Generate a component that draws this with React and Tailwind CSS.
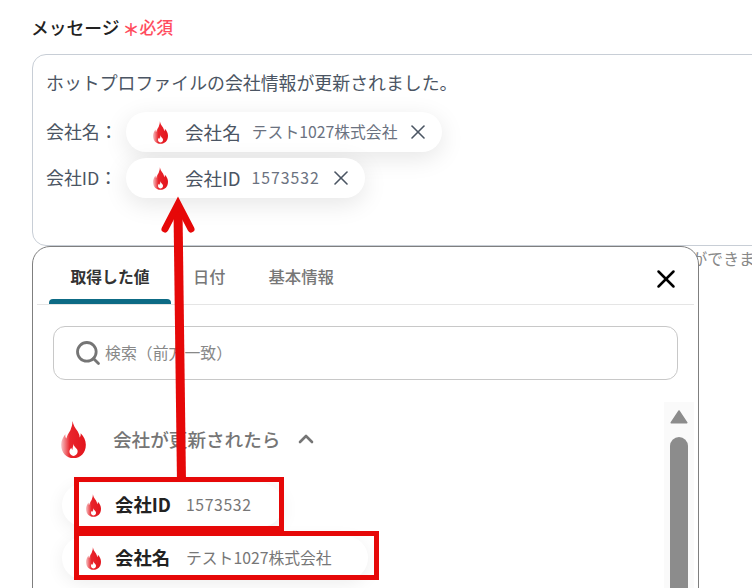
import React from 'react';
import { X, Search, ChevronUp } from 'lucide-react';

const jp = 'font-["Noto_Sans_CJK_JP","Noto_Sans",sans-serif]';

function Flame({ className }) {
  return (
    <svg viewBox="0 0 24 36" className={className}>
      <defs>
        <linearGradient id="flameFill" x1="0" x2="1" y1="0" y2="0">
          <stop offset="0" stopColor="#f6c4c6" />
          <stop offset="0.35" stopColor="#e9252c" />
          <stop offset="1" stopColor="#e2141c" />
        </linearGradient>
      </defs>
      <path
        fill="url(#flameFill)"
        d="M11 0c1 4 2 6 5 10 1 2 2 4 2 6 1-1 1-2 1-4 3 3 5 7 5 11 0 8-5 13-12 13S0 31 0 23c0-4 2-7 4-10 0 2 0 3 1 4 1-3 2-5 4-8 1-3 2-5 2-9z"
      />
      <path
        fill="#fff"
        d="M12 22c0 2 1 3 3 5 1 1 1 2 1 3 0 2-2 4-4 4s-4-2-4-4c0-2 1-3 2-4 0 1 0 1 1 2 0-2 1-4 1-6z"
      />
    </svg>
  );
}

function MessageChip({ label, value, digits }) {
  return (
    <span className="flex h-10 items-center rounded-full bg-white pl-[27px] pr-[12px] shadow-[0_6px_24px_rgba(0,0,0,0.10)]">
      <Flame className="h-[23px] w-[15px]" />
      <span className="ml-[17px] text-[18.6px] text-[#4b5563]">{label}</span>
      <span className={`ml-[11px] text-[15.8px] text-[#6b7280] ${digits ? 'tracking-[1px]' : ''}`}>{value}</span>
      <X className="ml-[9px] h-[24px] w-[24px] text-[#4b5563]" strokeWidth={1.6} />
    </span>
  );
}

function ValueChip({ label, value, width, digits }) {
  return (
    <div className={`flex h-[44px] items-center rounded-full bg-white pl-6 shadow-[0_4px_18px_rgba(0,0,0,0.07)] ${width}`}>
      <Flame className="h-[23px] w-[15px]" />
      <span className="ml-[14px] w-[71px] text-[18.4px] font-bold text-[#222]">{label}</span>
      <span className={`text-[15.8px] text-[#777] ${digits ? 'tracking-[0.6px]' : ''}`}>{value}</span>
    </div>
  );
}

export default function App() {
  return (
    <div className={`relative h-[588px] w-[752px] overflow-hidden bg-white ${jp}`}>
      <div className="pl-8 pt-[14px]">
        <div className="flex h-[26px] items-center">
          <span className="-ml-[1px] text-[17.8px] font-medium leading-[26px] text-[#222]">メッセージ</span>
          <span className="ml-[3px] mt-[3px] text-[17px] font-bold leading-[24px] text-[#ff4d5e]">＊</span>
          <span className="ml-[0px] mt-[1px] text-[16.8px] font-medium text-[#ff4d5e]">必須</span>
        </div>

        <div className="mt-[14px] h-[192px] w-[800px] rounded-[14px] border border-[#c8ced6] px-[13px] pt-[13px] text-[#4b5563]">
          <p className="text-[17.9px] leading-[28px]">ホットプロファイルの会社情報が更新されました。</p>
          <div className="mt-[16px] flex items-center">
            <span className="w-[80px] pb-[3px] text-[17.9px] leading-[34px]">会社名：</span>
            <MessageChip label="会社名" value="テスト1027株式会社" />
          </div>
          <div className="mt-[6px] flex items-center">
            <span className="w-[80px] pb-[3px] text-[17.9px] leading-[34px]">会社ID：</span>
            <MessageChip label="会社ID" value="1573532" digits />
          </div>
        </div>

        <p className="mt-[2px] whitespace-nowrap pl-[455px] text-[15.8px] leading-[22px] text-[#888]">
          値を埋め込んで送信することができます。
        </p>
      </div>

      {/* popover over the form */}
      <div className="absolute left-8 top-[246px] h-[360px] w-[667px] rounded-t-[18px] border border-[#7f7f7f] bg-white px-1">
        <div className="relative flex h-[58px] items-start border-b border-[#e5e5e5] pl-3">
          <div className="relative h-[57px] w-[122px] pt-[17px] text-center text-[15.8px] font-bold leading-[26px] text-[#333]">
            取得した値
            <div className="absolute bottom-0 left-0 right-0 h-[5px] rounded-t-[4px] bg-[#0d6b85]" />
          </div>
          <span className="ml-[22px] pt-[16px] text-[16.2px] font-medium leading-[26px] text-[#777]">日付</span>
          <span className="ml-[43px] pt-[16px] text-[16.4px] font-medium leading-[26px] text-[#777]">基本情報</span>
          <X className="absolute right-[13px] top-[17px] h-[30px] w-[30px] text-black" strokeWidth={2} />
        </div>

        <div className="ml-4 mt-[21px] flex h-[54px] w-[625px] items-center rounded-[12px] border border-[#c8c8c8] pl-[20px]">
          <Search className="h-[28px] w-[28px] text-[#757575]" strokeWidth={2.4} />
          <span className="ml-[3px] text-[15.9px] text-[#888]">検索（前方一致）</span>
        </div>

        <div className="relative mt-[22px] flex">
          <div className="flex-1">
            <div className="ml-6 flex h-[72px] items-center pt-[2px]">
              <Flame className="h-[37px] w-[25px]" />
              <span className="ml-[27px] text-[18.6px] font-medium text-[#757575]">会社が更新されたら</span>
              <ChevronUp className="ml-[14px] h-[24px] w-[24px] text-[#757575]" strokeWidth={2.6} />
            </div>
            <div className="ml-[25px] mt-[9px] flex flex-col gap-[9px]">
              <ValueChip label="会社ID" value="1573532" width="w-[221px]" digits />
              <ValueChip label="会社名" value="テスト1027株式会社" width="w-[306px]" />
            </div>
          </div>
          <div className="absolute right-0 top-0 flex h-[200px] w-[30px] flex-col items-center bg-[#fafafa] pt-2">
            <svg viewBox="0 0 18 14" className="h-[14px] w-[18px]">
              <path d="M9 1 L17 13 L1 13 Z" fill="#8c8c8c" stroke="#8c8c8c" strokeLinejoin="round" strokeWidth="1.5" />
            </svg>
            <div className="mt-[13px] h-[170px] w-[18px] rounded-t-full bg-[#8c8c8c]" />
          </div>
        </div>
      </div>

      {/* red annotations */}
      <div className="absolute left-[74px] top-[477px] h-[54px] w-[210px] border-[5px] border-[#e60808]" />
      <div className="absolute left-[74px] top-[531px] h-[49px] w-[305px] border-[5px] border-[#e60808]" />
      <svg className="absolute left-[150px] top-[190px] h-[292px] w-[60px]" viewBox="0 0 60 292">
        <path d="M31.5 292 L28 20" stroke="#e60808" strokeWidth="9" fill="none" />
        <path d="M15 39 L28 14 L41 39" stroke="#e60808" strokeWidth="7" fill="none" strokeLinecap="round" strokeLinejoin="miter" />
      </svg>
    </div>
  );
}
